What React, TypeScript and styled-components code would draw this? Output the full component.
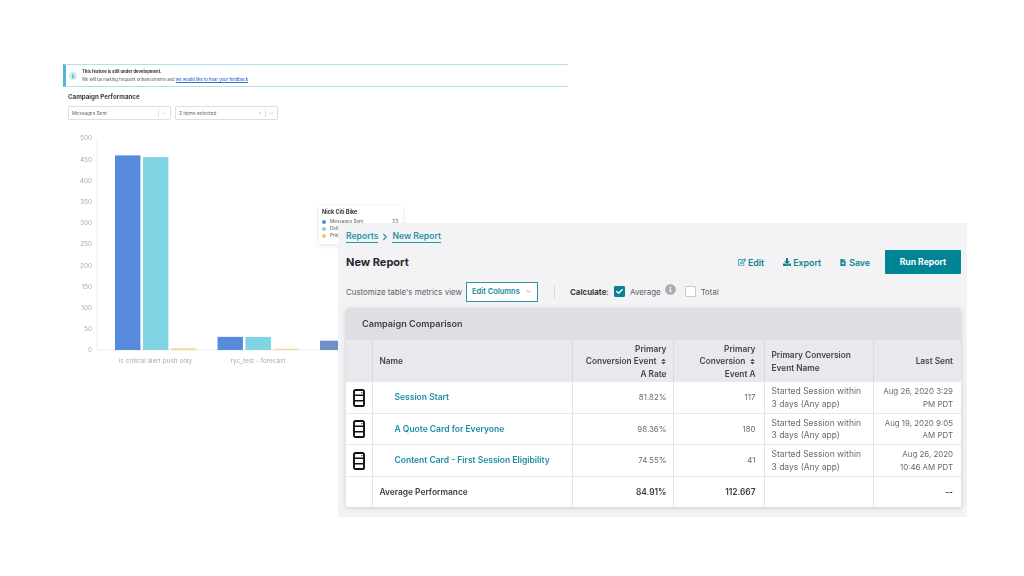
import React from "react";
import styled, { createGlobalStyle } from "styled-components";
import { FaRegEdit, FaDownload, FaSort, FaInfoCircle, FaCheck, FaFileAlt, FaInfo } from "react-icons/fa";
import { ChevronDown, ChevronRight, X } from "lucide-react";

const Global = createGlobalStyle`
  html, body { margin: 0; padding: 0; background: #fff; }
  body { font-family: "Inter", "Open Sans", Arial, sans-serif; width: 1024px; height: 576px; overflow: hidden; }
  * { box-sizing: border-box; }
`;

const Canvas = styled.div`position: relative; width: 1024px; height: 576px; background: #fff; overflow: hidden;`;

/* ---- chart screenshot ---- */
const ChartShot = styled.section`
  position: absolute; left: 63px; top: 64px; width: 505px;
  display: flex; flex-direction: column;
  filter: blur(0.35px);
`;
const Banner = styled.div`
  height: 23px; border: 1px solid #b5e0ea; border-left: 3px solid #4fb9cf; border-right: 0;
  display: flex; align-items: center; gap: 5px; padding-left: 3px;
`;
const BannerDot = styled.span`
  width: 8px; height: 8px; border-radius: 50%; background: #c9edf2; color: #1f8ea5;
  display: flex; align-items: center; justify-content: center; font-size: 4px;
`;
const BannerText = styled.div`font-size: 4.2px; line-height: 7.2px; color: #555;
  b { display: block; color: #333; font-weight: 700; }
  a { color: #2f6fd0; text-decoration: underline; font-weight: 500; }
`;
const ChartTitle = styled.h2`margin: 5px 0 0 5px; height: 14px; line-height: 9px; font-size: 6.2px; font-weight: 700; color: #3c3c40;`;
const SelectRow = styled.div`display: flex; gap: 4px; margin-left: 5px;`;
const FakeSelect = styled.div<{ $w: number }>`
  width: ${p => p.$w}px; height: 14px; border: 1px solid #dcdfe2; border-radius: 1px;
  display: flex; align-items: center; padding: 0 3px; font-size: 4.8px; color: #666; background: #fff;
`;
const SelectLabel = styled.span`flex: 1;`;
const SelectSep = styled.span`width: 1px; height: 8px; background: #dcdfe2; margin: 0 3px;`;
const Plot = styled.svg`display: block; width: 505px; height: 250px; font-family: "Inter", sans-serif;`;

const Tooltip = styled.div`
  position: absolute; left: 319px; top: 206px; width: 84px; height: 38px;
  background: #fff; box-shadow: 0 1px 5px rgba(0,0,0,.12); padding: 3px 5px 3px 3px;
  font-size: 4.6px; color: #555; filter: blur(0.3px);
`;
const TipTitle = styled.div`font-weight: 700; color: #333; line-height: 7px; font-size: 5.5px; margin-bottom: 2px;`;
const TipRow = styled.div`display: flex; align-items: center; gap: 4px; height: 7px;`;
const TipDot = styled.span<{ $c: string }>`width: 4px; height: 4px; border-radius: 50%; background: ${p => p.$c};`;
const TipName = styled.span`flex: 1;`;

/* ---- report screenshot ---- */
const Report = styled.section`
  position: absolute; left: 338px; top: 223px; width: 629px; height: 294px;
  background: #f3f3f5; padding: 8px 6px 10px 8px; display: flex; flex-direction: column;
  color: #3b3b40; filter: blur(0.2px);
`;
const Crumbs = styled.nav`display: flex; align-items: center; gap: 2px; height: 12px; font-size: 8.6px; font-weight: 600; color: #2a93a5;
  a { border-bottom: 1px solid #2a93a5; line-height: 11px; }
`;
const TitleRow = styled.div`display: flex; align-items: center; height: 25px; margin-top: 7px;`;
const PageTitle = styled.h1`margin: 0; flex: 1; font-size: 11px; line-height: 20px; font-weight: 700; color: #26262b;`;
const Action = styled.a<{ $gap: number }>`display: inline-flex; align-items: center; gap: 2px; font-size: 8.8px; font-weight: 600; color: #0d8494; margin-right: ${p => p.$gap}px;
  svg { width: 8px; height: 8px; }
`;
const SaveAction = styled(Action)`svg { width: 6px; height: 7px; } gap: 3px;`;
const RunButton = styled.button`
  width: 76px; height: 24px; background: #008596; color: #fff; border: 0; border-radius: 1px;
  font: 700 8.6px "Inter", sans-serif; padding: 0;
`;
const Toolbar = styled.div`display: flex; align-items: center; height: 22px; margin-top: 6px; font-size: 7.9px; color: #5c5c62;`;
const EditColumns = styled.div`
  width: 72px; height: 20px; margin-left: 4px; background: #fff; border: 1px solid #2a93a5;
  display: flex; align-items: center; justify-content: space-between; padding: 0 5px;
  font-size: 7.5px; font-weight: 600; color: #1a8a9b;
  svg { width: 7px; height: 7px; color: #777; }
`;
const Divider = styled.span`width: 1px; height: 12px; background: #d5d6da; margin: 0 15px 0 16px;`;
const CalcLabel = styled.b`color: #3b3b40; font-weight: 700; margin-right: 5px;`;
const Check = styled.span<{ $on?: boolean }>`
  width: 11px; height: 11px; border-radius: 1px; display: inline-flex; align-items: center; justify-content: center;
  background: ${p => (p.$on ? "#0b7f92" : "#fff")}; border: 1px solid ${p => (p.$on ? "#0b7f92" : "#c9cace")}; color: #fff;
  svg { width: 7px; height: 7px; }
`;
const CheckLabel = styled.span`margin-left: 5px;`;
const InfoMark = styled.span`display: inline-flex; margin: 0 9px 5px 4px; color: #a9abb0; svg { width: 11px; height: 11px; }`;

const Card = styled.div`
  margin-top: 5px; width: 615px; background: #fff; border-radius: 2px; box-shadow: 0 1px 5px rgba(0,0,0,.16); overflow: hidden;
`;
const CardHead = styled.div`height: 32px; background: #dfdfe3; padding-left: 16px; display: flex; align-items: center;
  font-size: 9.1px; font-weight: 600; color: #3f3f45;`;
const Table = styled.table`width: 615px; border-collapse: collapse; table-layout: fixed; font-size: 7.9px;`;
const Th = styled.th<{ $right?: boolean; $pad?: number }>`
  height: 42px; background: #e7e9ec; font-weight: 600; line-height: 12.2px; color: #45454b;
  padding: 2px ${p => p.$pad ?? 8}px 0 7px; font-size: 8.3px;
  text-align: ${p => (p.$right ? "right" : "left")}; border-left: 1px solid #d8dadd;
  &:first-child { border-left: 0; }
  svg { width: 7px; height: 7px; vertical-align: -1px; margin-left: 1px; }
`;
const Td = styled.td<{ $right?: boolean; $bold?: boolean; $pad?: number }>`
  height: 31.5px; padding: 0 ${p => p.$pad ?? 8}px 0 7px; line-height: 12.4px; color: ${p => (p.$bold ? "#3b3b40" : "#6b6b70")};
  font-weight: ${p => (p.$bold ? 600 : 400)};
  font-size: ${p => (p.$bold ? "8.4px" : "inherit")};
  text-align: ${p => (p.$right ? "right" : "left")}; border-left: 1px solid #e4e5e8; border-top: 1px solid #e8e9eb;
  &:first-child { border-left: 0; text-align: center; padding: 0; }
`;
const EventTd = styled(Td)`font-size: 8.5px; white-space: nowrap;`;
const NameLink = styled.a`display: block; padding-left: 15px; font-weight: 600; color: #1f8ea0; font-size: 8.5px;`;
const PhoneIcon = styled.svg`display: block; margin: 0 auto;`;

const Phone = () => (
  <PhoneIcon width="12" height="18" viewBox="0 0 12 18">
    <rect x="1" y="1" width="10" height="16" rx="1.6" fill="#fff" stroke="#111" strokeWidth="1.9" />
    <path d="M1 6.2h10M1 11.8h10" stroke="#111" strokeWidth="1.6" />
    <rect x="8" y="3" width="1.4" height="1.2" fill="#555" />
  </PhoneIcon>
);

const ticks = [500, 450, 400, 350, 300, 250, 200, 150, 100, 50, 0];
const groups = [
  { x: 52, label: "is critical alert push only", v: [459, 455, 4], c: "#568bdc" },
  { x: 154.5, label: "ryc_test - forecast", v: [31, 31, 3], c: "#568bdc" },
  { x: 257, label: "", v: [22, 0, 0], c: "#6d90c8" },
];
const scale = (350 - 138) / 500;
const base = 230;

const rows = [
  ["Session Start", "81.82%", "117", "Aug 26, 2020 3:29 PM PDT"],
  ["A Quote Card for Everyone", "98.36%", "180", "Aug 19, 2020 9:05 AM PDT"],
  ["Content Card - First Session Eligibility", "74.55%", "41", "Aug 26, 2020 10:46 AM PDT"],
];

export default function App() {
  return (
    <Canvas>
      <Global />
      <ChartShot>
        <Banner>
          <BannerDot><FaInfo /></BannerDot>
          <BannerText>
            <b>This feature is still under development.</b>
            We will be making frequent enhancements and <a>we would like to hear your feedback</a>
          </BannerText>
        </Banner>
        <ChartTitle>Campaign Performance</ChartTitle>
        <SelectRow>
          <FakeSelect $w={103}>
            <SelectLabel>Messages Sent</SelectLabel><SelectSep /><ChevronDown size={5} color="#999" />
          </FakeSelect>
          <FakeSelect $w={103}>
            <SelectLabel>2 items selected</SelectLabel><X size={4} color="#999" /><SelectSep /><ChevronDown size={5} color="#999" />
          </FakeSelect>
        </SelectRow>
        <Plot viewBox="0 0 505 250">
          {ticks.map(t => (
            <text key={t} x="29" y={base - t * scale + 2.4} textAnchor="end" fontSize="6.4" fill="#a8abb0">{t}</text>
          ))}
          <path d={`M34 ${base - 500 * scale}V${base}H505`} stroke="#e6e8ea" strokeWidth="0.8" fill="none" />
          {groups.map(g => (
            <g key={g.x}>
              <rect x={g.x} y={base - g.v[0] * scale} width="25.4" height={g.v[0] * scale} fill={g.c} />
              {g.v[1] > 0 && <rect x={g.x + 28} y={base - g.v[1] * scale} width="25.4" height={g.v[1] * scale} fill="#80d3e2" />}
              {g.v[2] > 0 && <rect x={g.x + 56} y={base - g.v[2] * scale} width="25.4" height={g.v[2] * scale} fill="#f6d78e" />}
              <text x={g.x + 40.5} y={base + 13} textAnchor="middle" fontSize="6.4" fill="#a8abb0">{g.label}</text>
            </g>
          ))}
        </Plot>
      </ChartShot>

      <Tooltip>
        <TipTitle>Nick Citi Bike</TipTitle>
        <TipRow><TipDot $c="#568bdc" /><TipName>Messages Sent</TipName>23</TipRow>
        <TipRow><TipDot $c="#80d3e2" /><TipName>Delivered</TipName></TipRow>
        <TipRow><TipDot $c="#f6c355" /><TipName>Primary</TipName></TipRow>
      </Tooltip>

      <Report>
        <Crumbs><a>Reports</a><ChevronRight size={10} strokeWidth={3} /><a>New Report</a></Crumbs>
        <TitleRow>
          <PageTitle>New Report</PageTitle>
          <Action $gap={19}><FaRegEdit />Edit</Action>
          <Action $gap={19}><FaDownload />Export</Action>
          <SaveAction $gap={15}><FaFileAlt />Save</SaveAction>
          <RunButton>Run Report</RunButton>
        </TitleRow>
        <Toolbar>
          Customize table's metrics view
          <EditColumns>Edit Columns<ChevronDown /></EditColumns>
          <Divider />
          <CalcLabel>Calculate:</CalcLabel>
          <Check $on><FaCheck /></Check>
          <CheckLabel>Average</CheckLabel>
          <InfoMark><FaInfoCircle /></InfoMark>
          <Check />
          <CheckLabel>Total</CheckLabel>
        </Toolbar>
        <Card>
          <CardHead>Campaign Comparison</CardHead>
          <Table>
            <colgroup>
              <col width="26" /><col width="200" /><col width="101" />
              <col width="91" /><col width="109" /><col width="88" />
            </colgroup>
            <thead>
              <tr>
                <Th />
                <Th>Name</Th>
                <Th $right $pad={6}>Primary<br />Conversion Event <FaSort /><br />A Rate</Th>
                <Th $right>Primary<br />Conversion <FaSort /><br />Event A</Th>
                <Th>Primary Conversion<br />Event Name</Th>
                <Th $right>Last Sent</Th>
              </tr>
            </thead>
            <tbody>
              {rows.map(r => (
                <tr key={r[0]}>
                  <Td><Phone /></Td>
                  <Td><NameLink>{r[0]}</NameLink></Td>
                  <Td $right $pad={6}>{r[1]}</Td>
                  <Td $right>{r[2]}</Td>
                  <EventTd>Started Session within<br />3 days (Any app)</EventTd>
                  <Td $right>{r[3]}</Td>
                </tr>
              ))}
              <tr>
                <Td />
                <Td $bold>Average Performance</Td>
                <Td $right $bold $pad={6}>84.91%</Td>
                <Td $right $bold>112.667</Td>
                <Td />
                <Td $right $bold>--</Td>
              </tr>
            </tbody>
          </Table>
        </Card>
      </Report>
    </Canvas>
  );
}
